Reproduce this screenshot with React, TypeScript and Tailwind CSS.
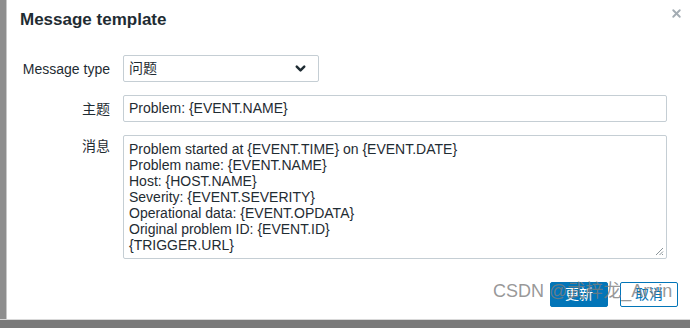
import { ChevronDown, X } from "lucide-react";

const lines = [
  "Problem started at {EVENT.TIME} on {EVENT.DATE}",
  "Problem name: {EVENT.NAME}",
  "Host: {HOST.NAME}",
  "Severity: {EVENT.SEVERITY}",
  "Operational data: {EVENT.OPDATA}",
  "Original problem ID: {EVENT.ID}",
  "{TRIGGER.URL}",
];

export default function App() {
  return (
    <div className="w-[690px] h-[328px] bg-[#7a7a7a] flex flex-col overflow-hidden font-['Liberation_Sans','Noto_Sans_CJK_SC',sans-serif] text-[#1f2c33]">
      <div className="flex flex-1">
        {/* page behind the dialog */}
        <div className="w-[7px] bg-[#8e8e8e] border-r border-[#c8c8c8]" />

        {/* dialog */}
        <div className="relative flex-1 bg-white flex flex-col">
          <div className="flex items-start justify-between pl-[13px] pr-[7px] pt-[9px]">
            <h1 className="text-[17px] font-bold leading-[22px]">Message template</h1>
            <X className="w-[13px] h-[13px] text-[#a3acb3] mt-[-2px]" strokeWidth={3.5} />
          </div>

          <div className="mt-[24px] grid grid-cols-[103px_1fr] gap-x-[13px] gap-y-[13px] text-[14px] pr-[23px]">
            <label className="text-right self-center leading-[16px]">Message type</label>
            <div className="w-[196px] h-[27px] border border-[#c5ced4] rounded-[2px] flex items-center justify-between pl-[5px] pr-[10px]">
              <span>问题</span>
              <ChevronDown className="w-[15px] h-[15px] text-[#1f2c33]" strokeWidth={4} />
            </div>

            <label className="text-right self-center leading-[16px]">主题</label>
            <div className="h-[27px] border border-[#c5ced4] rounded-[2px] flex items-center pl-[5px]">
              Problem: {"{EVENT.NAME}"}
            </div>

            <label className="text-right pt-[3px] leading-[16px]">消息</label>
            <div className="relative h-[124px] border border-[#c5ced4] rounded-[2px] pl-[5px] pt-[5px] leading-[16px]">
              {lines.map((l) => (
                <div key={l}>{l}</div>
              ))}
              <svg className="absolute right-[2px] bottom-[2px]" width="9" height="9" viewBox="0 0 9 9">
                <path d="M8 1L1 8M8 4.5L4.5 8M8 7L7 8" stroke="#8a9499" strokeWidth="1" />
              </svg>
            </div>
          </div>

          <div className="mt-[23px] flex justify-end gap-[12px] pr-[12px] text-[14px]">
            <button className="w-[58px] h-[25px] rounded-[2px] bg-[#0275b8] text-white border border-[#0275b8]">
              更新
            </button>
            <button className="w-[58px] h-[25px] rounded-[2px] bg-white text-[#0275b8] border border-[#0275b8]">
              取消
            </button>
          </div>

          {/* watermark over the buttons */}
          <div className="absolute z-10 left-[486px] top-[281px] text-[18px] text-[#7d7d7d]/80 leading-[20px] whitespace-nowrap pointer-events-none">
            CSDN @武梓龙_Arvin
          </div>
        </div>
      </div>
      <div className="h-[9px] bg-[#7a7a7a] border-t border-[#d9d9d9]" />
    </div>
  );
}
